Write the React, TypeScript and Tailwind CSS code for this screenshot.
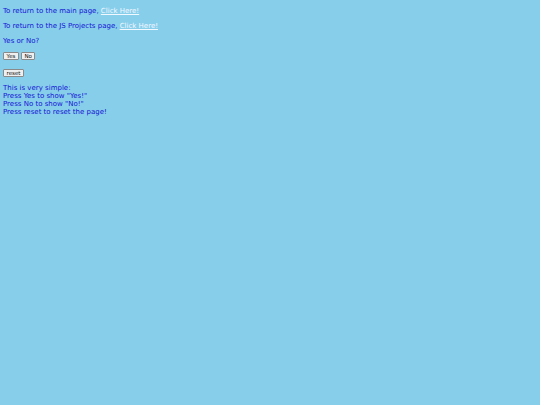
import React from "react";

const font = { fontFamily: '"DejaVu Sans", Verdana, sans-serif' };

function Btn({ label }: { label: string }) {
  return (
    <button
      type="button"
      className="h-[8px] px-[2.5px] bg-[#efefef] border border-[#8a8a8a] rounded-[1px] text-[5.5px] leading-[6px] text-[#111] flex items-center justify-center"
      style={font}
    >
      {label}
    </button>
  );
}

export default function App() {
  return (
    <div
      className="min-h-[405px] w-full bg-[#87ceeb] text-[#1414d4] text-[7px] leading-[8px] px-[3px] pt-[7px]"
      style={font}
    >
      <p>
        To return to the main page,{" "}
        <a href="#" className="text-[#f2f8ff] underline">
          Click Here!
        </a>
      </p>
      <p className="mt-[7px]">
        To return to the JS Projects page,{" "}
        <a href="#" className="text-[#f2f8ff] underline">
          Click Here!
        </a>
      </p>
      <p className="mt-[7px]">Yes or No?</p>
      <div className="mt-[6px] flex gap-[2px] h-[9px] items-center">
        <Btn label="Yes" />
        <Btn label="No" />
      </div>
      <div className="mt-[8px] flex h-[9px] items-center">
        <Btn label="reset" />
      </div>
      <div className="mt-[7px]">
        <div>This is very simple:</div>
        <div>Press Yes to show "Yes!"</div>
        <div>Press No to show "No!"</div>
        <div>Press reset to reset the page!</div>
      </div>
    </div>
  );
}
